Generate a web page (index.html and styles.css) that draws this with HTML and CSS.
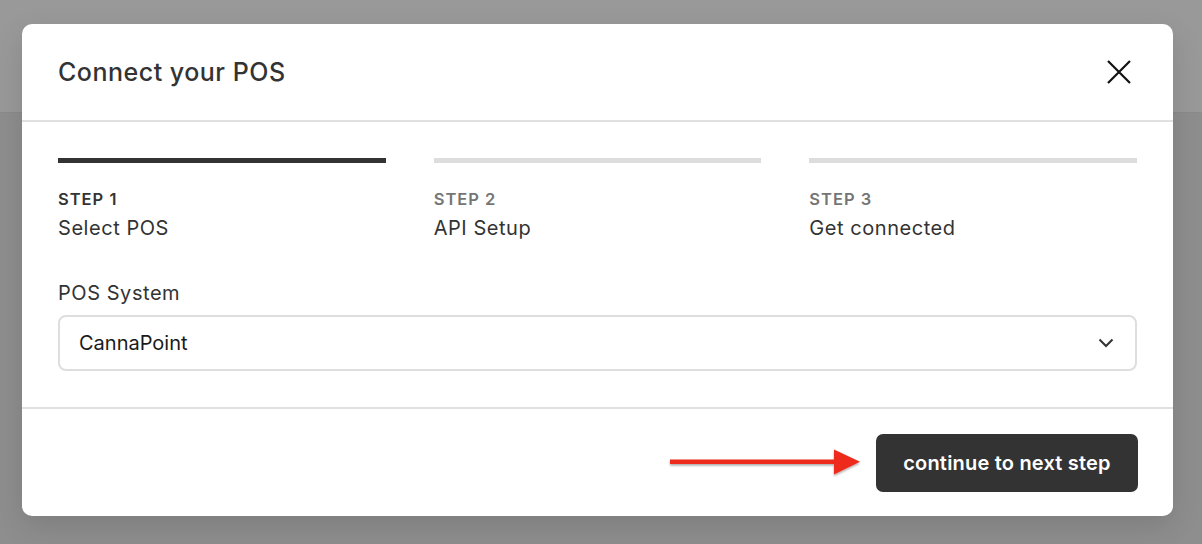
FILE: index.html
```html
<!DOCTYPE html>
<html lang="en">
<head>
<meta charset="utf-8">
<title>Connect your POS</title>
<link rel="stylesheet" href="styles.css">
</head>
<body>
<div class="backdrop">
  <div class="backdrop-top"></div>
  <div class="backdrop-main"></div>
</div>

<div class="modal">
  <div class="modal-header">
    <h1 class="modal-title">Connect your POS</h1>
    <button class="close-btn" aria-label="Close">
      <svg width="24" height="24" viewBox="0 0 24 24"><path d="M1 1 L23 23 M23 1 L1 23" stroke="#111" stroke-width="2.2" fill="none"/></svg>
    </button>
  </div>

  <div class="modal-body">
    <div class="steps">
      <div class="step active">
        <div class="step-bar"></div>
        <div class="step-label">STEP 1</div>
        <div class="step-title">Select POS</div>
      </div>
      <div class="step">
        <div class="step-bar"></div>
        <div class="step-label">STEP 2</div>
        <div class="step-title">API Setup</div>
      </div>
      <div class="step">
        <div class="step-bar"></div>
        <div class="step-label">STEP 3</div>
        <div class="step-title">Get connected</div>
      </div>
    </div>

    <div class="field">
      <div class="field-label">POS System</div>
      <div class="select">
        <span class="select-value">CannaPoint</span>
        <svg class="chevron" width="16" height="10" viewBox="0 0 16 10"><path d="M1.5 1.5 L8 8 L14.5 1.5" stroke="#333" stroke-width="2" fill="none"/></svg>
      </div>
    </div>
  </div>

  <div class="modal-footer">
    <svg class="arrow" width="194" height="30" viewBox="0 0 194 30">
      <defs>
        <filter id="sh" x="-10%" y="-50%" width="120%" height="200%">
          <feDropShadow dx="0" dy="1.5" stdDeviation="1.2" flood-color="#000" flood-opacity="0.35"/>
        </filter>
      </defs>
      <g filter="url(#sh)">
        <rect x="2" y="11.5" width="166" height="4.5" fill="#ee2a1e"/>
        <path d="M166 1.5 L192 13.8 L166 26.5 Z" fill="#ee2a1e"/>
      </g>
    </svg>
    <button class="primary-btn">continue to next step</button>
  </div>
</div>
</body>
</html>
```

FILE: styles.css
```css
* { box-sizing: border-box; }

html, body {
  margin: 0;
  padding: 0;
  width: 1202px;
  height: 544px;
  overflow: hidden;
  font-family: Inter, "Noto Sans", "Liberation Sans", sans-serif;
}

.backdrop {
  display: flex;
  flex-direction: column;
  height: 544px;
}

.backdrop-top {
  height: 113px;
  background: #999999;
  border-bottom: 1px solid #8a8a8a;
}

.backdrop-main {
  flex: 1;
  background: #8e8e8e;
}

.modal {
  position: absolute;
  left: 22px;
  top: 24px;
  width: 1151px;
  background: #ffffff;
  border-radius: 10px;
  box-shadow: 0 10px 30px rgba(0, 0, 0, 0.12);
}

.modal-header {
  height: 98px;
  padding: 0 36px;
  display: flex;
  align-items: center;
  justify-content: space-between;
  border-bottom: 2px solid #e0e0e0;
}

.modal-title {
  margin: 0;
  font-size: 25px;
  font-weight: 500;
  color: #333333;
  letter-spacing: 0.5px;
}

.close-btn {
  margin: 0 6px 0 0;
  padding: 0;
  border: 0;
  background: none;
  width: 24px;
  height: 24px;
  display: flex;
}

.modal-body {
  padding: 36px 36px 36px;
}

.steps {
  display: grid;
  grid-template-columns: repeat(3, 1fr);
  column-gap: 48px;
}

.step-bar {
  height: 5px;
  background: #dddddd;
}

.step.active .step-bar {
  background: #333333;
}

.step-label {
  margin-top: 24px;
  font-size: 16.5px;
  line-height: 24px;
  font-weight: 600;
  color: #757575;
  letter-spacing: 1px;
}

.step.active .step-label {
  color: #333333;
}

.step-title {
  margin-top: 4px;
  font-size: 20px;
  line-height: 26px;
  color: #333333;
  letter-spacing: 0.55px;
}

.field {
  margin-top: 38px;
}

.field-label {
  font-size: 20px;
  line-height: 28px;
  color: #333333;
  letter-spacing: 0.55px;
}

.select {
  margin-top: 8px;
  height: 56px;
  border: 2px solid #dedede;
  border-radius: 8px;
  padding: 0 21px 0 19px;
  display: flex;
  align-items: center;
  justify-content: space-between;
}

.select-value {
  font-size: 20px;
  color: #1a1a1a;
}

.modal-footer {
  border-top: 2px solid #e0e0e0;
  padding: 25px 35px 24px;
  display: flex;
  align-items: center;
  justify-content: flex-end;
}

.arrow {
  margin-right: 14px;
  display: block;
}

.primary-btn {
  height: 58px;
  width: 262px;
  border: 0;
  border-radius: 7px;
  background: #333333;
  color: #ffffff;
  font-family: Inter, "Noto Sans", "Liberation Sans", sans-serif;
  font-size: 20px;
  font-weight: 600;
  letter-spacing: 0.2px;
  padding: 0;
}
```
